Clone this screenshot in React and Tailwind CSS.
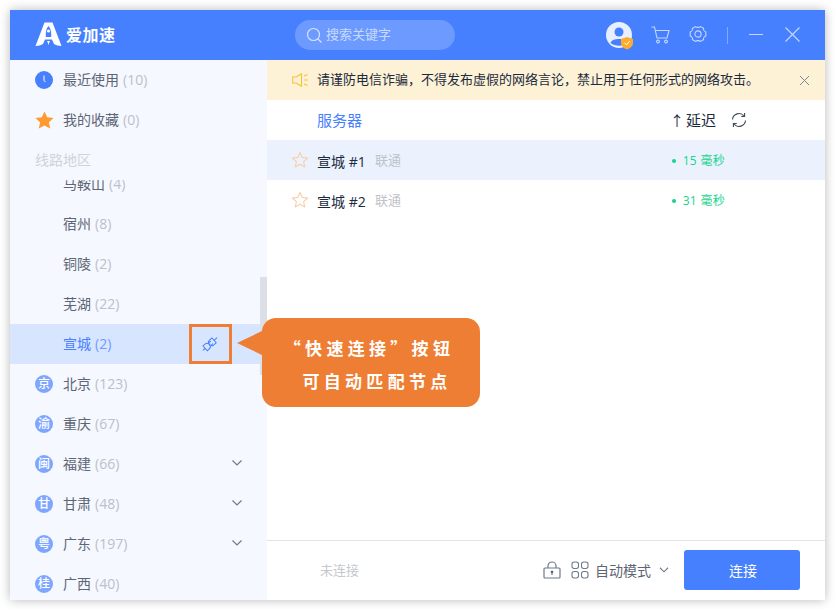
const FONT = '"Open Sans","Noto Sans CJK SC",sans-serif';

function ChevronDown({ className = "" }) {
  return (
    <svg width="12" height="8" viewBox="0 0 12 8" fill="none" stroke="#6f7a8c" strokeWidth="1.2" className={className}>
      <path d="M1.5 1.5 L6 6 L10.5 1.5" />
    </svg>
  );
}

function Star({ stroke = "#f8cfa6" }) {
  return (
    <svg width="18" height="18" viewBox="0 0 18 18" fill="none" stroke={stroke} strokeWidth="1.1" strokeLinejoin="round">
      <path d="M9 1.5 L11.2 6.4 L16.6 7 L12.6 10.6 L13.7 16 L9 13.2 L4.3 16 L5.4 10.6 L1.4 7 L6.8 6.4 Z" />
    </svg>
  );
}

function Row({ name, count, badge, active, chevron, icon }) {
  return (
    <div className={`flex items-center h-10 shrink-0 pl-[25px] ${active ? "bg-[#d7e5ff]" : ""}`}>
      <div className="w-[18px] mr-[10px] shrink-0 flex items-center justify-center">
        {icon}
        {badge && (
          <span className="w-[18px] h-[18px] rounded-full bg-[#7ea6ff] text-white text-[12px] font-medium leading-[18px] text-center">{badge}</span>
        )}
      </div>
      <span className={`text-[14px] pb-[2px] ${active ? "text-[#4680ff]" : "text-[#5e6675]"}`}>{name}</span>
      <span className={`text-[14px] pb-[2px] ml-1 ${active ? "text-[#6e9bff]" : "text-[#bcc0c8]"}`}>({count})</span>
      {chevron && <ChevronDown className="ml-auto mr-[24px] -mt-[3px]" />}
      {active && (
        <div className="ml-auto mr-[35px] w-[43px] h-10 border-[3px] border-[#ee7e33] flex items-center justify-center">
          <svg width="20" height="20" viewBox="0 0 20 20" fill="none" stroke="#4680ff" strokeWidth="1" className="-ml-[2px]">
            <g transform="rotate(-42 10 10)">
              <path d="M0.5 10 H3.5" />
              <path d="M3.5 6.8 H6.5 A3 3.2 0 0 1 9.2 10 A3 3.2 0 0 1 6.5 13.2 H3.5 Z" />
              <path d="M9.2 10 A3 3.2 0 0 1 12 6.8 H15.5 V13.2 H12 A3 3.2 0 0 1 9.2 10" />
              <path d="M15.5 10 H19.5" />
              <path d="M9.5 8.3 L12.5 8.3 M9.5 11.7 L12.5 11.7" />
            </g>
          </svg>
        </div>
      )}
    </div>
  );
}

function ServerRow({ n, ms, active }) {
  return (
    <div className={`flex items-center h-10 pl-[24px] pt-[2px] ${active ? "bg-[#ebf2fe]" : ""}`}>
      <div className="w-[18px] mr-[8px] -mt-[2px]"><Star /></div>
      <span className="text-[14px] text-[#1b2a3d] w-[58px]">宣城 #{n}</span>
      <span className="text-[13px] text-[#bfc3c9]">联通</span>
      <span className="ml-auto w-[4px] h-[4px] rounded-full bg-[#17d48c]" />
      <span className="ml-[7px] mr-[100px] text-[12px] tracking-[0.3px] text-[#17d48c] whitespace-pre">{ms} 毫秒</span>
    </div>
  );
}

export default function App() {
  return (
    <div className="w-[835px] h-[610px] p-[10px] bg-white overflow-hidden" style={{ fontFamily: FONT }}>
      <div className="relative w-[815px] h-[590px] flex flex-col bg-white shadow-[0_0_10px_rgba(0,0,0,0.28)] overflow-visible">
        {/* Header */}
        <header className="h-[50px] shrink-0 bg-[#4680ff] flex items-center pl-[25px]">
          <svg width="27" height="25" viewBox="0 0 27 25" className="shrink-0 -mt-[1px]">
            <path fill="#fff" fillRule="evenodd" d="M9.5 0.5 H17.5 L26.5 24 C23.5 24 21 23.2 19 22 L17 17.5 H10 L8 22 C6 23.2 3.5 24 0.5 24 Z M13.5 4 C11.5 6 10.8 9 10.8 12 L10.8 15 H16.2 L16.2 12 C16.2 9 15.5 6 13.5 4 Z" />
            <circle cx="13.5" cy="9" r="1.6" fill="#fff" />
            <path fill="#fff" d="M12.2 19 H14.8 L13.5 23 Z" />
          </svg>
          <span className="ml-[4px] w-[50px] text-[16px] font-bold text-white tracking-[0.5px] leading-none whitespace-nowrap">爱加速</span>
          <div className="ml-[179px] w-[160px] h-[30px] rounded-full bg-[#6c9aff] flex items-center pl-[11px]">
            <svg width="17" height="17" viewBox="0 0 17 17" fill="none" stroke="#d5e2ff" strokeWidth="1.2">
              <circle cx="7.5" cy="7.5" r="6" />
              <path d="M12 12 L15.5 15.5" />
            </svg>
            <span className="ml-[3px] text-[13px] text-[#c9dafd]">搜索关键字</span>
          </div>
          <div className="relative ml-[151px] w-[26px] h-[26px] rounded-full bg-[#e8efff] overflow-visible shrink-0">
            <svg width="26" height="26" viewBox="0 0 26 26">
              <circle cx="13" cy="10" r="4.5" fill="#4680ff" />
              <path d="M4.5 21 C5.5 15.5 20.5 15.5 21.5 21 C17 24.5 9 24.5 4.5 21 Z" fill="#4680ff" />
            </svg>
            <svg width="14" height="14" viewBox="0 0 14 14" className="absolute -right-[2px] -bottom-[2px]">
              <path d="M7 1 L13 3 V7 C13 10 10 12.5 7 13.5 C4 12.5 1 10 1 7 V3 Z" fill="#ffab2e" />
              <path d="M4.5 6.8 L6.5 8.8 L9.8 5" stroke="#fff" strokeWidth="1" fill="none" />
            </svg>
          </div>
          <svg width="19" height="18" viewBox="0 0 19 18" fill="none" stroke="#c7d8ff" strokeWidth="1.1" className="ml-[19px] shrink-0 -mt-[1px]">
            <path d="M0.5 1 H3.5 L6 12 H16 L18 4.5 H4.2" />
            <circle cx="7" cy="15.5" r="1.4" />
            <circle cx="15" cy="15.5" r="1.4" />
          </svg>
          <svg width="18" height="18" viewBox="0 0 18 18" fill="none" stroke="#c7d8ff" strokeWidth="1.1" className="ml-[19px] shrink-0 -mt-[2px]">
            <path d="M6.5 1.6 C7.5 2.6 10.5 2.6 11.5 1.6 L14.5 3.3 C14.2 4.8 15.4 6.6 16.8 7 V11 C15.4 11.4 14.2 13.2 14.5 14.7 L11.5 16.4 C10.5 15.4 7.5 15.4 6.5 16.4 L3.5 14.7 C3.8 13.2 2.6 11.4 1.2 11 V7 C2.6 6.6 3.8 4.8 3.5 3.3 Z" />
            <circle cx="9" cy="9" r="3.1" />
          </svg>
          <div className="ml-[20px] w-px h-[17px] bg-[#84a9ff]" />
          <div className="ml-[21px] w-[14px] h-px bg-[#c7d8ff] -mt-[1px]" />
          <svg width="15" height="15" viewBox="0 0 15 15" stroke="#c7d8ff" strokeWidth="1.1" className="ml-[22px] shrink-0 -mt-[1px]">
            <path d="M0.5 0.5 L14.5 14.5 M14.5 0.5 L0.5 14.5" />
          </svg>
        </header>

        <div className="flex flex-1 min-h-0">
          {/* Sidebar */}
          <aside className="relative w-[257px] shrink-0 bg-[#f5f8ff] flex flex-col overflow-hidden">
            <Row
              name="最近使用"
              count="10"
              icon={
                <svg width="18" height="18" viewBox="0 0 18 18">
                  <circle cx="9" cy="9" r="9" fill="#4680ff" />
                  <path d="M9 4.5 V9.5 L10.5 11" stroke="#fff" strokeWidth="1" fill="none" />
                </svg>
              }
            />
            <Row
              name="我的收藏"
              count="0"
              icon={
                <svg width="19" height="18" viewBox="0 0 19 18" className="shrink-0">
                  <path d="M9.5 0.5 L12.2 6.2 L18.6 7 L13.9 11.3 L15.2 17.6 L9.5 14.4 L3.8 17.6 L5.1 11.3 L0.4 7 L6.8 6.2 Z" fill="#ff9a2e" />
                </svg>
              }
            />
            <div className="h-10 shrink-0 pl-[25px] pb-[2px] flex items-center text-[14px] text-[#d0d3d8]">线路地区</div>
            <div className="flex-1 min-h-0 overflow-hidden">
              <div className="-mt-[16px] flex flex-col">
                <Row name="马鞍山" count="4" />
                <Row name="宿州" count="8" />
                <Row name="铜陵" count="2" />
                <Row name="芜湖" count="22" />
                <Row name="宣城" count="2" active />
                <Row name="北京" count="123" badge="京" />
                <Row name="重庆" count="67" badge="渝" />
                <Row name="福建" count="66" badge="闽" chevron />
                <Row name="甘肃" count="48" badge="甘" chevron />
                <Row name="广东" count="197" badge="粤" chevron />
                <Row name="广西" count="40" badge="桂" />
              </div>
            </div>
            <div className="absolute right-0 top-[217px] w-[7px] h-[98px] bg-[#dcdfe5]" />
          </aside>

          {/* Main */}
          <main className="flex-1 min-w-0 flex flex-col bg-white">
            <div className="h-10 shrink-0 bg-[#fdf1d6] flex items-center pl-[25px] pr-[15px]">
              <svg width="17" height="14" viewBox="0 0 17 14" fill="none" stroke="#fbc02d" strokeWidth="1.1" className="shrink-0">
                <path d="M0.8 4 H4 L9.5 0.8 V13.2 L4 10 H0.8 Z" />
                <path d="M12 3 L15.5 1.5 M12 7 H16 M12 11 L15.5 12.5" />
              </svg>
              <span className="ml-[8px] text-[13px] text-[#1b2a3d] whitespace-nowrap">请谨防电信诈骗，不得发布虚假的网络言论，禁止用于任何形式的网络攻击。</span>
              <svg width="11" height="11" viewBox="0 0 11 11" stroke="#7d8694" strokeWidth="1" className="ml-auto shrink-0">
                <path d="M1 1 L10 10 M10 1 L1 10" />
              </svg>
            </div>
            <div className="h-10 shrink-0 flex items-center pl-[50px]">
              <span className="text-[15px] text-[#4680ff]">服务器</span>
              <span className="ml-[308px] text-[14px] text-[#1b2a3d]">↑</span>
              <span className="ml-[2px] text-[15px] text-[#1b2a3d]">延迟</span>
              <svg width="16" height="16" viewBox="0 0 16 16" fill="none" stroke="#3f4856" strokeWidth="1.1" className="ml-[15px]">
                <path d="M1.5 7.5 A6.5 6.5 0 0 1 13 4 M14.5 8.5 A6.5 6.5 0 0 1 3 12" />
                <path d="M13.6 1 V4.5 H10.2 M2.4 15 V11.5 H5.8" />
              </svg>
            </div>
            <ServerRow n="1" ms="15" active />
            <ServerRow n="2" ms="31" />
            <div className="mt-auto h-[60px] shrink-0 border-t border-[#e3e3e3] flex items-center pl-[53px] pb-[1px]">
              <span className="text-[13px] text-[#c4c7cd] pt-[2px]">未连接</span>
              <svg width="18" height="18" viewBox="0 0 18 18" fill="none" stroke="#6f7a8c" strokeWidth="1.2" className="ml-[184px] shrink-0">
                <rect x="1" y="7" width="16" height="10" rx="1" />
                <path d="M5 7 V5 A4 4 0 0 1 13 5 V7" />
                <circle cx="9" cy="11" r="1.3" fill="#4a5361" stroke="none" />
                <path d="M9 11 V14" />
              </svg>
              <svg width="18" height="18" viewBox="0 0 18 18" fill="none" stroke="#6f7a8c" strokeWidth="1.1" className="ml-[10px] shrink-0">
                <rect x="1" y="1" width="6.5" height="6.5" rx="2.2" />
                <rect x="10.5" y="1" width="6.5" height="6.5" rx="2.2" />
                <rect x="1" y="10.5" width="6.5" height="6.5" rx="2.2" />
                <rect x="10.5" y="10.5" width="6.5" height="6.5" rx="2.2" />
              </svg>
              <span className="ml-[6px] text-[14px] text-[#5e6675] whitespace-nowrap">自动模式</span>
              <ChevronDown className="ml-[7px] -mt-[1px] scale-90" />
              <button className="ml-[14px] w-[116px] h-10 pl-[2px] rounded-[3px] bg-[#4680ff] text-white text-[14px]">连接</button>
            </div>
          </main>
        </div>

        {/* Callout */}
        <div className="absolute left-[252px] top-[308px] w-[218px] h-[89px] pt-[2px] rounded-[14px] bg-[#ee7e33] flex flex-col items-center justify-center text-white text-[17px] font-bold tracking-[4.3px] leading-[33px]" style={{ fontFamily: '"Noto Sans CJK SC",sans-serif' }}>
          <span className="absolute -left-[25px] top-[13px] w-0 h-0 border-y-[12px] border-y-transparent border-r-[25px] border-r-[#ee7e33]" />
          <div className="whitespace-nowrap pr-[4px]">“快速连接”按钮</div>
          <div className="whitespace-nowrap pl-[12px]">可自动匹配节点</div>
        </div>
      </div>
    </div>
  );
}
